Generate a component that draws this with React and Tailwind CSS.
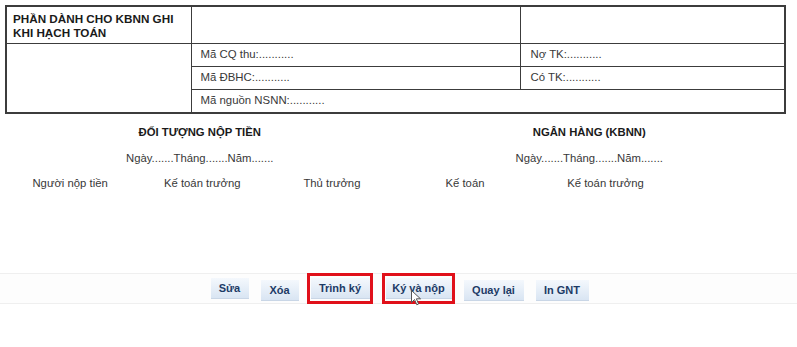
import React from 'react';

const font = { fontFamily: '"Liberation Sans", Arial, sans-serif' };

function Btn({ label, w }) {
  return (
    <button
      type="button"
      className={`h-[21px] ${w} bg-gradient-to-b from-[#f4f8fd] to-[#d9e5f3] border-b border-[#c9d6e6] text-[11px] font-bold text-[#1d3b66] leading-[21px] text-center`}
    >
      {label}
    </button>
  );
}

function Boxed({ children }) {
  return <div className="border-[3px] border-[#e0101a] py-[2px] pl-px pr-0 flex">{children}</div>;
}

function Cursor() {
  return (
    <svg className="absolute left-[411px] top-[290px]" width="11" height="16" viewBox="0 0 11 16">
      <path d="M0.5 0.5 L0.5 12.5 L3.5 9.5 L5.8 14.8 L7.6 14 L5.4 8.8 L9.5 8.8 Z" fill="#fff" stroke="#555" strokeWidth="1" strokeLinejoin="round" />
    </svg>
  );
}

export default function App() {
  const cell = 'border border-[#3c3c3c]';
  return (
    <div className="relative w-[797px] h-[347px] bg-white text-[#383838] overflow-hidden" style={font}>
      <div className="pt-[5px] pl-[5px]">
        <table className="w-[779px] border-collapse border-2 border-[#3c3c3c] text-[11.4px] table-fixed">
          <colgroup>
            <col className="w-[185px]" />
            <col className="w-[329px]" />
            <col className="w-[265px]" />
          </colgroup>
          <tbody>
            <tr className="h-[37px]">
              <td className={`${cell} align-top px-[6px] pt-[5px] text-[11.7px] font-bold text-[#1a1a1a] leading-[14px]`}>
                PHẦN DÀNH CHO KBNN GHI KHI HẠCH TOÁN
              </td>
              <td className={cell}></td>
              <td className={cell}></td>
            </tr>
            <tr className="h-[23px]">
              <td className={cell} rowSpan={3}></td>
              <td className={`${cell} px-[9px]`}>Mã CQ thu:...........</td>
              <td className={`${cell} px-[10px]`}>Nợ TK:...........</td>
            </tr>
            <tr className="h-[23px]">
              <td className={`${cell} px-[9px]`}>Mã ĐBHC:...........</td>
              <td className={`${cell} px-[10px]`}>Có TK:...........</td>
            </tr>
            <tr className="h-[24px]">
              <td className={`${cell} px-[9px]`} colSpan={2}>Mã nguồn NSNN:...........</td>
            </tr>
          </tbody>
        </table>

        <div className="w-[779px] grid grid-cols-2 text-[11.3px] mt-[11px]">
          <div className="flex flex-col items-center">
            <div className="font-bold text-[#1a1a1a] leading-[14px]">ĐỐI TƯỢNG NỘP TIỀN</div>
            <div className="mt-[12px] leading-[14px]">Ngày.......Tháng.......Năm.......</div>
            <div className="mt-[11px] leading-[14px] flex self-stretch">
              <div className="w-[131px] text-center">Người nộp tiền</div>
              <div className="w-[135px] text-center">Kế toán trưởng</div>
              <div className="w-[126px] text-center">Thủ trưởng</div>
            </div>
          </div>
          <div className="flex flex-col items-center">
            <div className="font-bold text-[#1a1a1a] leading-[14px]">NGÂN HÀNG (KBNN)</div>
            <div className="mt-[12px] leading-[14px]">Ngày.......Tháng.......Năm.......</div>
            <div className="mt-[11px] leading-[14px] flex self-stretch">
              <div className="w-[141px] text-center">Kế toán</div>
              <div className="w-[140px] text-center">Kế toán trưởng</div>
            </div>
          </div>
        </div>
      </div>

      <div className="mt-[83px] h-[31px] border-y border-[#efefef] bg-[#fdfdfd] flex justify-center items-center pl-[2px]">
        <Btn label="Sửa" w="w-[38px]" />
        <div className="ml-[12px]"><Btn label="Xóa" w="w-[38px]" /></div>
        <div className="ml-[8px]"><Boxed><Btn label="Trình ký" w="w-[59px]" /></Boxed></div>
        <div className="ml-[9px]"><Boxed><Btn label="Ký và nộp" w="w-[66px]" /></Boxed></div>
        <div className="ml-[9px]"><Btn label="Quay lại" w="w-[60px]" /></div>
        <div className="ml-[12px]"><Btn label="In GNT" w="w-[53px]" /></div>
      </div>
      <Cursor />
    </div>
  );
}
